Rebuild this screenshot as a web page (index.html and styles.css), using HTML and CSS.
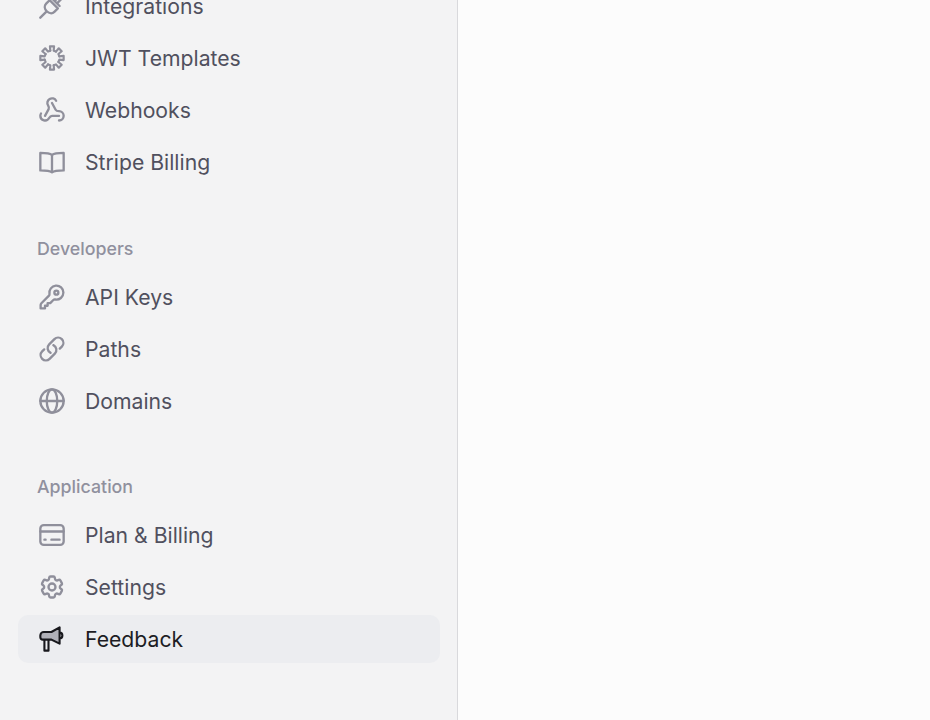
FILE: index.html
```html
<!DOCTYPE html>
<html lang="en">
<head>
    <meta charset="UTF-8">
    <meta name="viewport" content="width=device-width, initial-scale=1.0">
    <title>Dashboard</title>
    <link rel="stylesheet" href="styles.css">
</head>
<body>

<div class="layout">
    <!-- Sidebar, scrolled part way down -->
    <nav class="sidebar">
        <div class="section section-first">
            <a class="nav-item">
                <svg class="icon" viewBox="0 0 24 24"><path d="M2 22l5-5M7.500 16.500c-2-2-2.300-4.700-.5-6.500l3-3 7 7-3 3c-1.800 1.800-4.500 1.500-6.500-.5zM12 5.500l6.500 6.500M14.500 7.500L18 4M16.500 9.500L20 6"/></svg>
                <span>Integrations</span>
            </a>
            <a class="nav-item">
                <svg class="icon" viewBox="-1 -1 26 26">
                    <path id="tooth" d="M10.430 5.180L10.090 1.170H13.910L13.570 5.180L15.710 6.060"/>
                    <use href="#tooth" transform="rotate(45 12 12)"/>
                    <use href="#tooth" transform="rotate(90 12 12)"/>
                    <use href="#tooth" transform="rotate(135 12 12)"/>
                    <use href="#tooth" transform="rotate(180 12 12)"/>
                    <use href="#tooth" transform="rotate(225 12 12)"/>
                    <use href="#tooth" transform="rotate(270 12 12)"/>
                    <use href="#tooth" transform="rotate(315 12 12)"/>
                </svg>
                <span>JWT Templates</span>
            </a>
            <a class="nav-item">
                <svg class="icon" viewBox="0 0 24 24"><path d="M18 16.980h-5.990c-1.100 0-1.950.94-2.480 1.900A4 4 0 0 1 2 17c.01-.7.2-1.400.57-2"/><path d="m6 17 3.130-5.780c.53-.97.1-2.180-.5-3.100a4 4 0 1 1 6.890-4.060"/><path d="m12 6 3.130 5.730C15.660 12.700 16.900 13 18 13a4 4 0 0 1 0 8"/></svg>
                <span>Webhooks</span>
            </a>
            <a class="nav-item">
                <svg class="icon" viewBox="0 0 24 24"><path d="M12 6C10.500 4.800 8 4.200 2 4.200v15c6 0 8.500.5 10 1.600 1.500-1.100 4-1.600 10-1.600v-15C16 4.200 13.500 4.800 12 6zM12 6v14.800"/></svg>
                <span>Stripe Billing</span>
            </a>
        </div>

        <div class="section">
            <h3 class="section-title">Developers</h3>
            <a class="nav-item">
                <svg class="icon" viewBox="0 0 24 24"><circle cx="15.750" cy="8.250" r="1.700"/><path d="M21.750 8.250a6 6 0 01-7.029 5.912c-.563-.097-1.159.026-1.563.43L10.500 17.250H8.250v2.250H6v2.250H2.250v-2.818c0-.597.237-1.170.659-1.591l6.499-6.499c.404-.404.527-1 .43-1.563A6 6 0 1121.750 8.250z"/></svg>
                <span>API Keys</span>
            </a>
            <a class="nav-item">
                <svg class="icon" viewBox="0 0 24 24"><path d="M13.190 8.688a4.500 4.500 0 011.242 7.244l-4.500 4.500a4.500 4.500 0 01-6.364-6.364l1.757-1.757m13.350-.622l1.757-1.757a4.500 4.500 0 00-6.364-6.364l-4.500 4.500a4.500 4.500 0 001.242 7.244"/></svg>
                <span>Paths</span>
            </a>
            <a class="nav-item">
                <svg class="icon" viewBox="0 0 24 24"><circle cx="12" cy="12" r="10"/><ellipse cx="12" cy="12" rx="4.500" ry="10"/><path d="M2 12h20"/></svg>
                <span>Domains</span>
            </a>
        </div>

        <div class="section section-last">
            <h3 class="section-title">Application</h3>
            <a class="nav-item">
                <svg class="icon" viewBox="0 0 24 24"><rect x="2" y="3.500" width="20" height="17" rx="3"/><path d="M2 9h20M5.500 16h1M11.500 16h7"/></svg>
                <span>Plan &amp; Billing</span>
            </a>
            <a class="nav-item">
                <svg class="icon" viewBox="0 0 24 24"><path d="M9.594 3.940c.09-.542.56-.94 1.110-.94h2.593c.55 0 1.020.398 1.110.94l.213 1.281c.063.374.313.686.645.870.074.04.147.083.22.127.324.196.72.257 1.075.124l1.217-.456a1.125 1.125 0 011.370.49l1.296 2.247a1.125 1.125 0 01-.26 1.431l-1.003.827c-.293.24-.438.613-.431.992a6.759 6.759 0 010 .255c-.007.378.138.75.43.99l1.005.828c.424.35.534.954.26 1.430l-1.298 2.247a1.125 1.125 0 01-1.369.491l-1.217-.456c-.355-.133-.75-.072-1.076.124a6.570 6.570 0 01-.22.128c-.331.183-.581.495-.644.869l-.213 1.280c-.09.543-.56.941-1.110.941h-2.594c-.55 0-1.020-.398-1.110-.94l-.213-1.281c-.062-.374-.312-.686-.644-.870a6.520 6.520 0 01-.22-.127c-.325-.196-.72-.257-1.076-.124l-1.217.456a1.125 1.125 0 01-1.369-.49l-1.297-2.247a1.125 1.125 0 01.26-1.431l1.004-.827c.292-.24.437-.613.43-.992a6.932 6.932 0 010-.255c.007-.378-.138-.75-.43-.99l-1.004-.828a1.125 1.125 0 01-.26-1.430l1.297-2.247a1.125 1.125 0 011.370-.491l1.216.456c.356.133.751.072 1.076-.124.072-.044.146-.087.22-.128.332-.183.582-.495.644-.869l.214-1.281z"/><circle cx="12" cy="12" r="3"/></svg>
                <span>Settings</span>
            </a>
            <a class="nav-item active">
                <svg class="icon" viewBox="0 0 24 24"><path class="icon-fill" d="M5 6h6.500l7-4v14l-7-3.500H4a2 2 0 0 1-2-2V9a3 3 0 0 1 3-3z"/><path d="M5 6h6.500l7-4v14l-7-3.500H4a2 2 0 0 1-2-2V9a3 3 0 0 1 3-3zM5.500 12.500V22h3.500v-9.500M18.500 6.500c3.200 0 3.200 5 0 5"/></svg>
                <span>Feedback</span>
            </a>
        </div>
    </nav>

    <main class="content"></main>
</div>

</body>
</html>
```

FILE: styles.css
```css
/* Basic page setup */
body {
    margin: 0;
    font-family: Inter, 'Noto Sans', sans-serif;
    background-color: #fcfcfc;
}

.layout {
    display: flex;
    height: 720px;
    overflow: hidden;
}

/* Sidebar */
.sidebar {
    width: 458px;
    flex-shrink: 0;
    box-sizing: border-box;
    padding: 0 17px 0 18px;
    background-color: #f3f3f4;
    border-right: 1px solid #d9d9dc;
}

.content {
    flex: 1;
    background-color: #fcfcfc;
}

/* Sections of the nav */
.section {
    display: flex;
    flex-direction: column;
    gap: 4px;
    margin-top: 50px;
}

.section-first {
    margin-top: -18px;
}

.section-last {
    margin-top: 49px;
}

.section-title {
    margin: 0 0 8px 0;
    padding-left: 19px;
    font-size: 17.800px;
    line-height: 25px;
    font-weight: 500;
    color: #90909e;
}

/* Nav rows */
.nav-item {
    display: flex;
    align-items: center;
    gap: 19px;
    height: 48px;
    padding-left: 20px;
    border-radius: 10px;
    font-size: 21.200px;
    font-weight: 430;
    color: #50505e;
}

.nav-item.active {
    background-color: #ecedf0;
    color: #1d1d24;
}

/* Icons */
.icon {
    width: 28px;
    height: 28px;
    flex-shrink: 0;
    fill: none;
    stroke: #8f8f9b;
    stroke-width: 2;
    stroke-linecap: round;
    stroke-linejoin: round;
}

.active .icon {
    stroke: #18181d;
    stroke-width: 1.800;
}

.active .icon-fill {
    fill: #b0b0b8;
    stroke: none;
}
```
